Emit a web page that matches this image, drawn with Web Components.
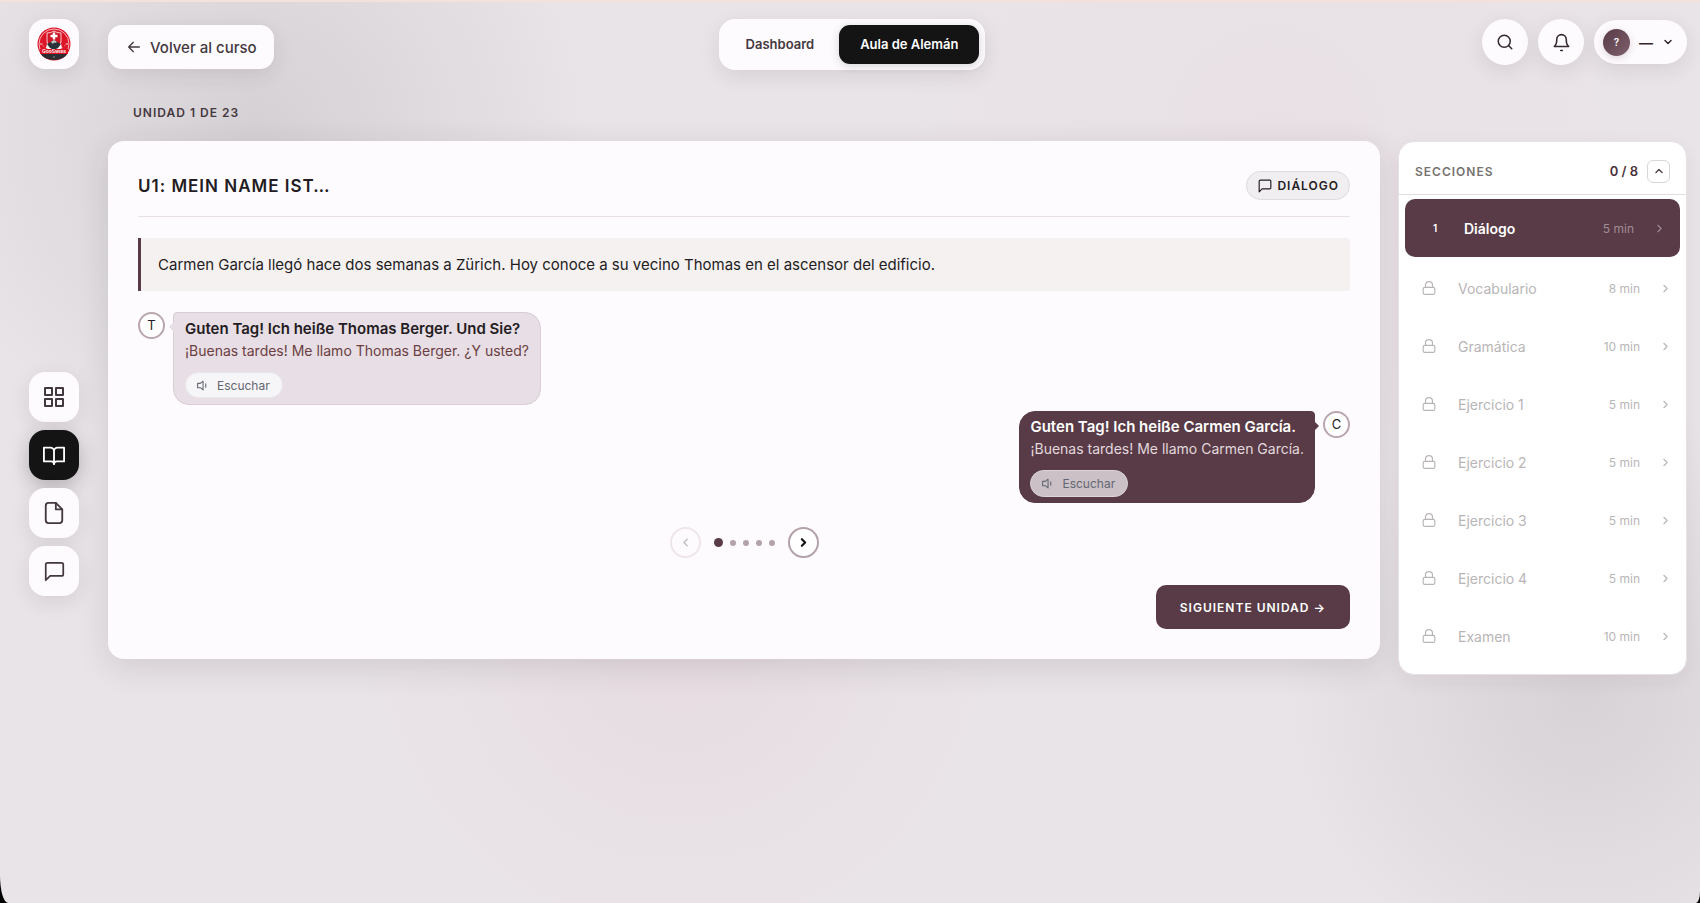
<!DOCTYPE html>
<html lang="es">
<head>
<meta charset="utf-8">
<meta name="viewport" content="width=device-width, initial-scale=1">
<title>Aula de Alemán</title>
<style>
  :root {
    --c-plum: #583b46;
    --c-ink: #231c22;
    --c-text: #443840;
    --c-card: #fefbfe;
    --c-black: #141414;
    --shadow: 0 6px 20px rgba(50, 35, 45, 0.1);
  }

  html {
    background: #000;
  }

  body {
    margin: 0;
    font-family: Inter, "Liberation Sans", sans-serif;
    color: var(--c-text);
  }
</style>
</head>
<body>
<app-shell>
  <app-logo slot="start"></app-logo>
  <back-link slot="start" href="#curso">Volver al curso</back-link>
  <nav-tabs slot="center"></nav-tabs>
  <user-tools slot="end"></user-tools>
  <side-rail slot="rail"></side-rail>
  <unit-card slot="main" heading="U1: MEIN NAME IST…" kind="DIÁLOGO">
    <span slot="intro">Carmen García llegó hace dos semanas a Zürich. Hoy conoce a su vecino Thomas en el ascensor del edificio.</span>
    <chat-line initial="T">
      Guten Tag! Ich heiße Thomas Berger. Und Sie?
      <span slot="translation">¡Buenas tardes! Me llamo Thomas Berger. ¿Y usted?</span>
    </chat-line>
    <chat-line initial="C" mine>
      Guten Tag! Ich heiße Carmen García.
      <span slot="translation">¡Buenas tardes! Me llamo Carmen García.</span>
    </chat-line>
  </unit-card>
  <section-list slot="aside"></section-list>
</app-shell>

<script>
(function() {
  const icons = {
    back: '<path d="M20 12H4M11 5l-7 7 7 7"/>',
    search: '<circle cx="11" cy="11" r="8"/><path d="M21 21l-4-4"/>',
    bell: '<path d="M18 8A6 6 0 0 0 6 8c0 7-3 9-3 9h18s-3-2-3-9"/><path d="M11 22h2"/>',
    down: '<path d="M6 9l6 6 6-6"/>',
    up: '<path d="M6 15l6-6 6 6"/>',
    left: '<path d="M15 18l-6-6 6-6"/>',
    right: '<path d="M9 18l6-6-6-6"/>',
    grid: '<path d="M3 3h7v7H3zM14 3h7v7h-7zM14 14h7v7h-7zM3 14h7v7H3z"/>',
    book: '<path d="M1 4h7a4 4 0 0 1 4 4v14a3 3 0 0 0-3-3H1zM23 4h-7a4 4 0 0 0-4 4v14a3 3 0 0 1 3-3h8z"/>',
    file: '<path d="M14 1H6a3 3 0 0 0-3 3v16a3 3 0 0 0 3 3h12a3 3 0 0 0 3-3V8z"/><path d="M14 1v7h7"/>',
    chat: '<path d="M22 15a2 2 0 0 1-2 2H7l-5 5V4a2 2 0 0 1 2-2h16a2 2 0 0 1 2 2z"/>',
    sound: '<path d="M13 4L8 8H3v8h5l5 4z"/><path d="M18 9v6"/>',
    lock: '<rect x="2" y="11" width="20" height="12" rx="3"/><path d="M6 11V7a6 6 0 0 1 12 0v4"/>',
  };

  class UiIcon extends HTMLElement {
    constructor() {
      super();
      const shadowRoot = this.attachShadow({ mode: 'open' });
      const size = this.getAttribute('size') || 20;
      const weight = this.getAttribute('weight') || 2;

      shadowRoot.innerHTML = `
  <style>
  :host {
    display: inline-flex;
    flex: none;
  }
  </style>
  <svg width="${size}" height="${size}" viewBox="0 0 24 24" fill="none" stroke="currentColor"
    stroke-width="${weight}" stroke-linecap="round" stroke-linejoin="round" aria-hidden="true">
    ${icons[this.getAttribute('name')]}
  </svg>
  `;
    }
  }

  class AppShell extends HTMLElement {
    constructor() {
      super();
      const shadowRoot = this.attachShadow({ mode: 'open' });

      shadowRoot.innerHTML = `
  <style>
  :host {
    display: flex;
    flex-direction: column;
    box-sizing: border-box;
    min-height: 100vh;
    border-top: 2px solid #f3e2dc;
    border-radius: 0 0 4px 8px / 0 0 12px 28px;
    background:
      radial-gradient(circle at 15% 15%, rgba(70, 66, 70, 0.12), transparent 340px),
      radial-gradient(circle at 93% 77%, rgba(70, 66, 70, 0.11), transparent 300px),
      radial-gradient(circle at 40% 70%, rgba(200, 120, 140, 0.08), transparent 330px),
      radial-gradient(circle at 75% 15%, rgba(220, 150, 170, 0.05), transparent 380px),
      #e9e4e8;
  }

  header {
    display: grid;
    grid-template-columns: 1fr auto 1fr;
    align-items: start;
    padding: 17px 13px 0 17px;
  }

  .start {
    display: flex;
    align-items: flex-end;
    gap: 29px;
    padding-left: 12px;
  }

  .end {
    display: flex;
    justify-content: flex-end;
  }

  .body {
    display: grid;
    grid-template-columns: 108px minmax(0, 1fr) 289px;
    flex: 1;
    align-items: start;
    padding-right: 13px;
  }

  .rail {
    align-self: center;
    padding: 0 0 5px 29px;
  }

  .aside {
    padding-top: 71px;
  }

  .main {
    padding-right: 18px;
  }
  </style>
  <header>
    <div class="start"><slot name="start"></slot></div>
    <slot name="center"></slot>
    <div class="end"><slot name="end"></slot></div>
  </header>
  <div class="body">
    <div class="rail"><slot name="rail"></slot></div>
    <main class="main"><slot name="main"></slot></main>
    <div class="aside"><slot name="aside"></slot></div>
  </div>
  `;
    }
  }

  class AppLogo extends HTMLElement {
    constructor() {
      super();
      const shadowRoot = this.attachShadow({ mode: 'open' });

      shadowRoot.innerHTML = `
  <style>
  :host {
    display: grid;
    place-items: center;
    width: 50px;
    height: 50px;
    border-radius: 16px;
    background: var(--c-card);
    box-shadow: var(--shadow);
  }
  </style>
  <svg width="34" height="34" viewBox="0 0 34 34" role="img" aria-label="GooSwiss">
    <circle cx="17" cy="17" r="16.500" fill="#dc1425"/>
    <circle cx="17" cy="17" r="15" fill="none" stroke="#fff" stroke-width=".7"/>
    <path d="M5 13c0 5 2 8 6 9h12c4-1 6-4 6-9 0 5-1 7-4 8l-3-13-5-3-5 3-3 13c-3-1-4-3-4-8z" fill="#fff"/>
    <path d="M10 6q4 0 7-2 3 2 7 2v8q0 6-7 9-7-3-7-9z" fill="#cf1526" stroke="#fff" stroke-width=".8"/>
    <path d="M15.800 5.500h2.400v2.300h2.300v2.400h-2.300v2.300h-2.400v-2.300h-2.300V7.800h2.300z" fill="#fff"/>
    <path d="M10 17l4-2 3-2 3 2 4 2-3 4-4 2-4-2z" fill="#2b333a"/>
    <path d="M14 15l3-2 3 2-2 1-1-1-1 2z" fill="#cdd3d6"/>
    <path d="M3 26h28q-4 7-14 7T3 26z" fill="#2c2c33"/>
    <path d="M3 22h28v5H3z" fill="#dc1425"/>
    <text x="17" y="26" text-anchor="middle" font-size="5" font-weight="600" fill="#fff">GooSwiss</text>
    <circle cx="4" cy="17" r=".8" fill="#fff"/>
    <circle cx="30" cy="17" r=".8" fill="#fff"/>
    <circle cx="17" cy="30" r=".7" fill="#aaa"/>
  </svg>
  `;
    }
  }

  class BackLink extends HTMLElement {
    constructor() {
      super();
      const shadowRoot = this.attachShadow({ mode: 'open' });

      shadowRoot.innerHTML = `
  <style>
  :host {
    display: block;
  }

  a {
    display: flex;
    align-items: center;
    gap: 8px;
    height: 44px;
    padding: 0 17px 0 18px;
    border-radius: 14px;
    background: var(--c-card);
    box-shadow: var(--shadow);
    color: var(--c-text);
    font-size: 15px;
    font-weight: 500;
    text-decoration: none;
  }
  </style>
  <a href="${this.getAttribute('href')}"><ui-icon name="back" size="16"></ui-icon><slot></slot></a>
  `;
    }
  }

  class NavTabs extends HTMLElement {
    constructor() {
      super();
      const shadowRoot = this.attachShadow({ mode: 'open' });

      shadowRoot.innerHTML = `
  <style>
  :host {
    display: block;
  }

  nav {
    display: flex;
    padding: 6px;
    border-radius: 16px;
    background: var(--c-card);
    box-shadow: var(--shadow);
  }

  a {
    padding: 0 21px;
    border-radius: 11px;
    color: var(--c-text);
    font-size: 13px;
    font-weight: 600;
    line-height: 39px;
    text-decoration: none;
  }

  a[aria-current] {
    margin-left: 4px;
    background: var(--c-black);
    box-shadow: 0 2px 10px rgba(0, 0, 0, 0.16);
    color: #fff;
  }
  </style>
  <nav>
    <a href="#dashboard">Dashboard</a>
    <a href="#aula" aria-current="page">Aula de Alemán</a>
  </nav>
  `;
    }
  }

  class UserTools extends HTMLElement {
    constructor() {
      super();
      const shadowRoot = this.attachShadow({ mode: 'open' });

      shadowRoot.innerHTML = `
  <style>
  :host {
    display: flex;
    align-items: center;
    gap: 10px;
  }

  button {
    display: flex;
    align-items: center;
    justify-content: center;
    width: 46px;
    height: 46px;
    padding: 0;
    border: 0;
    border-radius: 23px;
    background: var(--c-card);
    box-shadow: var(--shadow);
    color: #33292f;
    font: inherit;
  }

  .user {
    gap: 9px;
    width: 93px;
    height: 44px;
    padding-right: 4px;
  }

  .avatar {
    width: 27px;
    border-radius: 50%;
    background: linear-gradient(135deg, #583b46, #7d606b);
    box-shadow: 0 2px 8px rgba(88, 59, 70, 0.2);
    color: #fff;
    font-size: 10px;
    font-weight: 600;
    line-height: 27px;
  }

  .name {
    font-size: 14px;
    font-weight: 600;
  }
  </style>
  <button aria-label="Buscar"><ui-icon name="search" size="18"></ui-icon></button>
  <button aria-label="Avisos"><ui-icon name="bell" size="19"></ui-icon></button>
  <button class="user" aria-label="Cuenta">
    <span class="avatar">?</span>
    <span class="name">—</span>
    <ui-icon name="down" size="12" weight="3"></ui-icon>
  </button>
  `;
    }
  }

  class SideRail extends HTMLElement {
    constructor() {
      super();
      const shadowRoot = this.attachShadow({ mode: 'open' });

      shadowRoot.innerHTML = `
  <style>
  :host {
    display: block;
  }

  nav {
    display: grid;
    gap: 8px;
  }

  a {
    display: grid;
    place-items: center;
    width: 50px;
    height: 50px;
    border-radius: 16px;
    background: var(--c-card);
    box-shadow: var(--shadow);
    color: var(--c-text);
  }

  a[aria-current] {
    background: var(--c-black);
    box-shadow: 0 6px 20px rgba(0, 0, 0, 0.24);
    color: #fff;
  }
  </style>
  <nav>
    <a href="#inicio" aria-label="Inicio"><ui-icon name="grid" size="24"></ui-icon></a>
    <a href="#curso" aria-label="Curso" aria-current="page"><ui-icon name="book" size="22"></ui-icon></a>
    <a href="#documentos" aria-label="Documentos"><ui-icon name="file" size="22"></ui-icon></a>
    <a href="#mensajes" aria-label="Mensajes"><ui-icon name="chat" size="21"></ui-icon></a>
  </nav>
  `;
    }
  }

  class ChatLine extends HTMLElement {
    constructor() {
      super();
      const shadowRoot = this.attachShadow({ mode: 'open' });

      shadowRoot.innerHTML = `
  <style>
  :host {
    display: flex;
    align-items: flex-start;
    gap: 8px;
  }

  :host([mine]) {
    flex-direction: row-reverse;
  }

  .avatar {
    flex: none;
    box-sizing: border-box;
    width: 27px;
    height: 27px;
    border: 2px solid #b9a6ae;
    border-radius: 50%;
    background: #fff;
    color: var(--c-ink);
    font-size: 13px;
    line-height: 23px;
    text-align: center;
  }

  .bubble {
    position: relative;
    padding: 5px 11px 6px;
    border: 1px solid #d9ccd5;
    border-radius: 4px 16px 16px 16px;
    background: #e8dee5;
  }

  .bubble::before {
    content: "";
    position: absolute;
    top: 9px;
    right: 100%;
    border: 5px solid transparent;
    border-left: 0;
    border-right-color: #e8dee5;
  }

  p {
    margin: 0;
    color: var(--c-ink);
    font-size: 15px;
    font-weight: 600;
    line-height: 22px;
  }

  .translation {
    color: #6b3f42;
    font-size: 14px;
    font-weight: 400;
  }

  button {
    display: flex;
    align-items: center;
    gap: 8px;
    height: 26px;
    margin-top: 10px;
    padding: 0 12px 0 10px;
    border: 1px solid #eae6ea;
    border-radius: 14px;
    background: #f6f5f7;
    color: #626772;
    font: inherit;
    font-size: 12px;
  }

  :host([mine]) .bubble {
    padding: 4px 10px 5px;
    border-color: var(--c-plum);
    border-radius: 16px 4px 16px 16px;
    background: var(--c-plum);
  }

  :host([mine]) .bubble::before {
    right: auto;
    left: 100%;
    border: 5px solid transparent;
    border-right: 0;
    border-left-color: var(--c-plum);
  }

  :host([mine]) p {
    color: #fff;
  }

  :host([mine]) .translation {
    color: #e3d8dd;
  }

  :host([mine]) button {
    height: 27px;
    border-color: #ddd5da;
    background: #cac0c5;
  }
  </style>
  <span class="avatar">${this.getAttribute('initial')}</span>
  <div class="bubble">
    <p lang="de"><slot></slot></p>
    <p class="translation"><slot name="translation"></slot></p>
    <button><ui-icon name="sound" size="13"></ui-icon>Escuchar</button>
  </div>
  `;
    }
  }

  class StepPager extends HTMLElement {
    constructor() {
      super();
      const shadowRoot = this.attachShadow({ mode: 'open' });

      shadowRoot.innerHTML = `
  <style>
  :host {
    display: flex;
    align-items: center;
    justify-content: center;
    gap: 13px;
  }

  button {
    display: grid;
    place-items: center;
    width: 31px;
    height: 31px;
    padding: 0;
    border: 2px solid #b3a2aa;
    border-radius: 50%;
    background: #fff;
    color: #141414;
  }

  button:disabled {
    border-color: #eee6eb;
    background: transparent;
    color: #c5c0c5;
  }

  .dots {
    display: flex;
    align-items: center;
    gap: 7px;
  }

  i {
    width: 6px;
    height: 6px;
    border-radius: 50%;
    background: #b3a2aa;
  }

  i:first-child {
    width: 9px;
    height: 9px;
    background: var(--c-plum);
  }
  </style>
  <button disabled aria-label="Anterior"><ui-icon name="left" size="13" weight="3"></ui-icon></button>
  <span class="dots"><i></i><i></i><i></i><i></i><i></i></span>
  <button aria-label="Siguiente"><ui-icon name="right" size="13" weight="4"></ui-icon></button>
  `;
    }
  }

  class UnitCard extends HTMLElement {
    constructor() {
      super();
      const shadowRoot = this.attachShadow({ mode: 'open' });

      shadowRoot.innerHTML = `
  <style>
  :host {
    display: block;
  }

  .unit {
    margin: 0;
    padding: 33px 25px 18px;
    font-size: 12px;
    font-weight: 600;
    letter-spacing: 1px;
    line-height: 20px;
  }

  article {
    padding: 30px;
    border-radius: 16px;
    background: var(--c-card);
    box-shadow: 0 8px 32px rgba(50, 35, 45, 0.13);
  }

  .head {
    display: flex;
    align-items: center;
    justify-content: space-between;
    padding-bottom: 16px;
    border-bottom: 1px solid #e9e0e3;
  }

  h1 {
    margin: 0;
    color: var(--c-ink);
    font-size: 17px;
    font-weight: 600;
    letter-spacing: 1px;
    line-height: 24px;
  }

  .kind {
    display: flex;
    align-items: center;
    gap: 5px;
    box-sizing: border-box;
    height: 29px;
    padding: 0 10px 0 11px;
    border: 1px solid #dedbde;
    border-radius: 15px;
    background: #f0eef0;
    color: var(--c-ink);
    font-size: 12px;
    font-weight: 600;
    letter-spacing: 1px;
  }

  .intro {
    margin: 21px 0;
    padding: 15px 17px;
    border-left: 3px solid var(--c-plum);
    border-radius: 0 4px 4px 0;
    background: #f6f1f1;
    color: var(--c-ink);
    font-size: 15px;
    line-height: 23px;
  }

  .lines {
    display: grid;
    gap: 6px;
    margin-bottom: 24px;
  }

  .foot {
    display: flex;
    justify-content: flex-end;
    margin-top: 27px;
  }

  .next {
    height: 44px;
    padding: 0 24px;
    border: 0;
    border-radius: 10px;
    background: var(--c-plum);
    color: #fff;
    font: inherit;
    font-size: 12px;
    font-weight: 600;
    letter-spacing: 1px;
  }
  </style>
  <p class="unit">UNIDAD 1 DE 23</p>
  <article>
    <div class="head">
      <h1>${this.getAttribute('heading')}</h1>
      <span class="kind"><ui-icon name="chat" size="14"></ui-icon>${this.getAttribute('kind')}</span>
    </div>
    <p class="intro"><slot name="intro"></slot></p>
    <div class="lines"><slot></slot></div>
    <step-pager></step-pager>
    <div class="foot"><button class="next">SIGUIENTE UNIDAD →</button></div>
  </article>
  `;
    }
  }

  const sections = [
    { title: 'Diálogo', time: '5 min' },
    { title: 'Vocabulario', time: '8 min' },
    { title: 'Gramática', time: '10 min' },
    { title: 'Ejercicio 1', time: '5 min' },
    { title: 'Ejercicio 2', time: '5 min' },
    { title: 'Ejercicio 3', time: '5 min' },
    { title: 'Ejercicio 4', time: '5 min' },
    { title: 'Examen', time: '10 min' },
  ];

  class SectionList extends HTMLElement {
    constructor() {
      super();
      const shadowRoot = this.attachShadow({ mode: 'open' });

      // only the first section is open, the others are locked
      const rows = sections.map(({ title, time }, i) => `
      <li>
        <button ${i ? 'disabled' : 'aria-current="step"'}>
          <span class="mark">${i ? '<ui-icon name="lock" size="14"></ui-icon>' : '1'}</span>
          <span class="title">${title}</span>
          <span class="time">${time}</span>
          <ui-icon name="right" size="13"></ui-icon>
        </button>
      </li>`).join('');

      shadowRoot.innerHTML = `
  <style>
  :host {
    display: block;
    border: 1px solid #e5e1e5;
    border-radius: 16px;
    background: #fff;
    box-shadow: 0 6px 20px rgba(50, 35, 45, 0.06);
  }

  header {
    display: flex;
    align-items: center;
    box-sizing: border-box;
    height: 53px;
    padding: 6px 16px 0;
    border-bottom: 1px solid #e2dfe2;
  }

  h2 {
    flex: 1;
    margin: 0;
    color: #77726f;
    font-size: 12px;
    font-weight: 600;
    letter-spacing: 1px;
  }

  .count {
    margin-right: 9px;
    color: #4a323c;
    font-size: 13px;
    font-weight: 600;
  }

  .toggle {
    display: grid;
    place-items: center;
    width: 23px;
    height: 23px;
    padding: 0;
    border: 1px solid #d9d6d9;
    border-radius: 6px;
    background: #fff;
    color: #55494f;
  }

  ol {
    margin: 0;
    padding: 4px 6px 9px;
    list-style: none;
  }

  li:first-child {
    margin-bottom: 2px;
  }

  li button {
    display: flex;
    align-items: center;
    width: 100%;
    height: 58px;
    padding: 0 8px 0 11px;
    border: 0;
    border-radius: 10px;
    background: none;
    color: #b9b5b7;
    font: inherit;
    font-size: 14px;
    text-align: left;
  }

  .mark {
    display: grid;
    place-items: center;
    width: 26px;
    margin-right: 16px;
  }

  .title {
    flex: 1;
  }

  .time {
    margin-right: 19px;
    font-size: 12px;
  }

  button[aria-current] {
    padding: 0 14px 0 17px;
    background: var(--c-plum);
    color: #a18b95;
  }

  [aria-current] .mark {
    color: #fff;
    font-size: 10px;
    font-weight: 600;
  }

  [aria-current] .title {
    color: #fff;
    font-weight: 600;
  }
  </style>
  <aside>
    <header>
      <h2>SECCIONES</h2>
      <span class="count">0 / 8</span>
      <button class="toggle" aria-label="Plegar"><ui-icon name="up" size="12" weight="3"></ui-icon></button>
    </header>
    <ol>${rows}</ol>
  </aside>
  `;
    }
  }

  window.customElements.define('ui-icon', UiIcon);
  window.customElements.define('app-shell', AppShell);
  window.customElements.define('app-logo', AppLogo);
  window.customElements.define('back-link', BackLink);
  window.customElements.define('nav-tabs', NavTabs);
  window.customElements.define('user-tools', UserTools);
  window.customElements.define('side-rail', SideRail);
  window.customElements.define('chat-line', ChatLine);
  window.customElements.define('step-pager', StepPager);
  window.customElements.define('unit-card', UnitCard);
  window.customElements.define('section-list', SectionList);
})();
</script>
</body>
</html>
